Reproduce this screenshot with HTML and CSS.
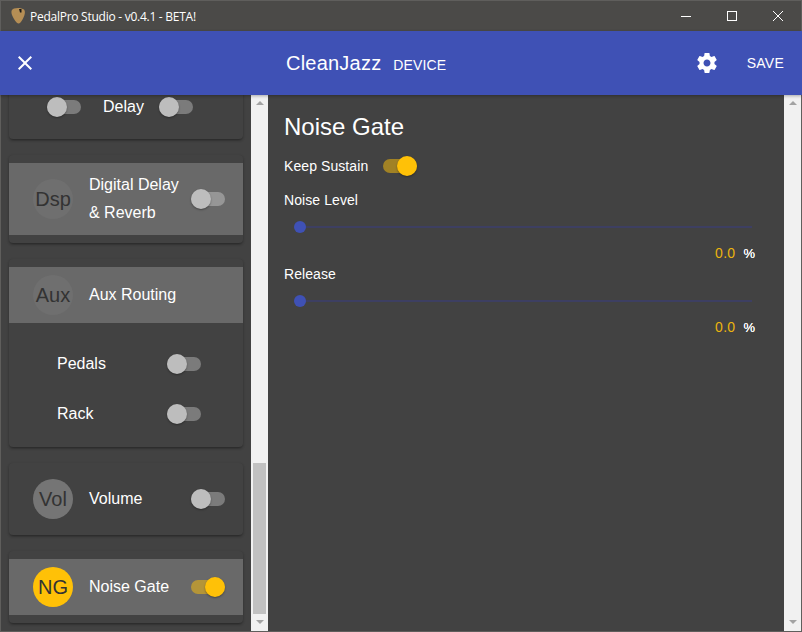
FILE: index.html
```html
<!DOCTYPE html>
<html lang="en">
<head>
<meta charset="utf-8">
<title>PedalPro Studio</title>
<link rel="stylesheet" href="styles.css">
</head>
<body>
<div class="window">
  <div class="titlebar">
    <svg class="pick" width="16" height="18" viewBox="0 0 16 18"><path d="M4 1.500C7 .5 12 .8 14 2.500c1.500 1.500 1 5-.5 8-1.200 2.500-2.800 5.500-4.500 6-1.500.3-3.500-2-5-4.500C2.500 9.500 1 6.500 1.500 4 1.800 2.800 2.800 2 4 1.500Z" fill="#b58e55"/><path d="M9 2h2.500v3.500H10z" fill="#1c1a18"/></svg>
    <span class="apptitle">PedalPro Studio - v0.4.1 - BETA!</span>
    <div class="winbtns">
      <svg class="winbtn" width="46" height="31" viewBox="0 0 46 31"><path d="M18 15.500h10" stroke="#fff" fill="none"/></svg>
      <svg class="winbtn" width="46" height="31" viewBox="0 0 46 31"><rect x="18.500" y="10.500" width="9" height="9" stroke="#fff" fill="none"/></svg>
      <svg class="winbtn" width="46" height="31" viewBox="0 0 46 31"><path d="M18 10l10 10M28 10L18 20" stroke="#fff" fill="none"/></svg>
    </div>
  </div>
  <header class="appbar">
    <svg class="closeicon" width="24" height="24" viewBox="0 0 24 24"><path fill="#fff" d="M19 6.410 17.590 5 12 10.590 6.410 5 5 6.410 10.590 12 5 17.590 6.410 19 12 13.410 17.590 19 19 17.590 13.410 12z"/></svg>
    <div class="apphead"><span class="patch">CleanJazz</span><span class="device">DEVICE</span></div>
    <svg class="gear" width="24" height="24" viewBox="0 0 24 24"><path fill="#fff" d="M19.430 12.980c.04-.32.07-.64.070-.98s-.03-.66-.07-.98l2.110-1.650c.19-.15.240-.42.120-.64l-2-3.460c-.12-.22-.39-.3-.61-.22l-2.490 1c-.52-.4-1.080-.73-1.690-.98l-.38-2.650C14.460 2.180 14.250 2 14 2h-4c-.25 0-.46.18-.49.42l-.38 2.650c-.61.25-1.170.59-1.690.98l-2.490-1c-.23-.09-.49 0-.61.22l-2 3.460c-.13.22-.07.49.12.64l2.110 1.650c-.04.32-.07.65-.07.98s.03.66.07.98l-2.110 1.650c-.19.15-.24.42-.12.64l2 3.460c.12.22.39.3.61.22l2.490-1c.52.4 1.080.73 1.690.98l.38 2.650c.03.24.24.42.49.42h4c.25 0 .46-.18.49-.42l.38-2.650c.61-.25 1.170-.59 1.690-.98l2.490 1c.23.09.49 0 .61-.22l2-3.460c.12-.22.07-.49-.12-.64l-2.110-1.650zM12 15.500c-1.930 0-3.500-1.570-3.500-3.500s1.570-3.500 3.500-3.500 3.500 1.570 3.500 3.500-1.570 3.500-3.500 3.500z"/></svg>
    <span class="save">SAVE</span>
  </header>
  <div class="body">
    <aside class="sidebar">
      <section class="card">
        <div class="row delayrow">
          <span class="toggle"><i class="track"></i><i class="thumb"></i></span>
          <span class="label delaylabel">Delay</span>
          <span class="toggle"><i class="track"></i><i class="thumb"></i></span>
        </div>
      </section>
      <section class="card">
        <div class="row band tall">
          <span class="avatar dim">Dsp</span>
          <span class="label two">Digital Delay<br>&amp; Reverb</span>
          <span class="toggle end"><i class="track"></i><i class="thumb"></i></span>
        </div>
      </section>
      <section class="card">
        <div class="row band">
          <span class="avatar dim">Aux</span>
          <span class="label">Aux Routing</span>
        </div>
        <div class="subs">
          <div class="sub"><span class="sublabel">Pedals</span><span class="toggle"><i class="track"></i><i class="thumb"></i></span></div>
          <div class="sub"><span class="sublabel">Rack</span><span class="toggle"><i class="track"></i><i class="thumb"></i></span></div>
        </div>
      </section>
      <section class="card">
        <div class="row">
          <span class="avatar">Vol</span>
          <span class="label">Volume</span>
          <span class="toggle end"><i class="track"></i><i class="thumb"></i></span>
        </div>
      </section>
      <section class="card">
        <div class="row band">
          <span class="avatar on">NG</span>
          <span class="label">Noise Gate</span>
          <span class="toggle end checked"><i class="track"></i><i class="thumb"></i></span>
        </div>
      </section>
    </aside>
    <div class="scrollbar">
      <i class="arrow up"></i>
      <div class="scrollspace left"><div class="scrollthumb"></div></div>
      <i class="arrow down"></i>
    </div>
    <main class="main">
      <h1 class="title">Noise Gate</h1>
      <div class="sustain"><span class="field">Keep Sustain</span><span class="toggle checked"><i class="track"></i><i class="thumb"></i></span></div>
      <div class="param">
        <div class="field">Noise Level</div>
        <div class="slider"><i class="sliderthumb"></i></div>
        <div class="value"><span class="num">0.0</span><span class="unit">%</span></div>
      </div>
      <div class="param">
        <div class="field">Release</div>
        <div class="slider"><i class="sliderthumb"></i></div>
        <div class="value"><span class="num">0.0</span><span class="unit">%</span></div>
      </div>
    </main>
    <div class="scrollbar">
      <i class="arrow up"></i>
      <div class="scrollspace"></div>
      <i class="arrow down"></i>
    </div>
  </div>
</div>
</body>
</html>
```
FILE: styles.css
```css
* { box-sizing: border-box; }
html, body { margin: 0; height: 100%; background: #424242; }
body { font-family: "Liberation Sans", Arial, sans-serif; color: #fff; overflow: hidden; }
.window { width: 802px; height: 632px; border: 1px solid #5f5e5c; display: flex; flex-direction: column; background: #424242; }

.titlebar { height: 30px; flex: none; background: #4b4a48; display: flex; align-items: center; padding-left: 9px; }
.pick { flex: none; }
.apptitle { font-family: "Open Sans", sans-serif; font-size: 12px; margin-left: 4px; color: #fff; letter-spacing: -.26px; }
.winbtns { margin-left: auto; display: flex; }
.winbtn { display: block; }

.appbar { height: 64px; flex: none; margin: 0 -1px; background: #3f51b5; display: flex; align-items: center; padding: 0 18px 0 13px; position: relative; z-index: 2; box-shadow: 0 1px 3px rgba(0,0,0,.3); }
.closeicon { flex: none; }
.apphead { flex: 1; display: flex; align-items: baseline; padding-left: 249px; }
.patch { font-size: 20px; letter-spacing: .22px; }
.device { font-size: 14px; margin-left: 12px; letter-spacing: .1px; }
.gear { flex: none; margin-right: 28px; }
.save { font-size: 14px; letter-spacing: .25px; }

.body { flex: 1; min-height: 0; display: flex; }
.sidebar { width: 250px; flex: none; overflow: hidden; display: flex; flex-direction: column; justify-content: flex-end; gap: 16px; padding: 0 8px 8px; }
.card { flex: none; background: #424242; border-radius: 4px; padding: 8px 0; box-shadow: 0 2px 3px -1px rgba(0,0,0,.35), 0 1px 3px rgba(0,0,0,.18); }
.row { height: 56px; display: flex; align-items: center; padding-left: 24px; }
.row.tall { height: 72px; }
.band { background: #696969; }
.delayrow { height: 48px; padding-left: 38px; }
.avatar { width: 40px; height: 40px; flex: none; border-radius: 50%; background: #757575; color: #333; font-size: 20px; display: flex; align-items: center; justify-content: center; }
.avatar.dim { background: #6f6f6f; }
.avatar.on { background: #ffc107; }
.label { font-size: 16px; margin-left: 16px; line-height: 28px; color: #fff; }
.label.two { width: 102px; flex: none; }
.delaylabel { margin-left: 22px; margin-right: 15px; }
.end { margin-left: auto; margin-right: 18px; }

.toggle { position: relative; display: inline-block; width: 34px; height: 20px; flex: none; }
.track { position: absolute; left: 0; right: 0; top: 3px; height: 14px; border-radius: 7px; background: rgba(255,255,255,.3); }
.thumb { position: absolute; left: 0; top: 0; width: 20px; height: 20px; border-radius: 50%; background: #bdbdbd; box-shadow: 0 1px 2px rgba(0,0,0,.35); }
.checked .track { background: rgba(255,193,7,.5); }
.checked .thumb { left: 14px; background: #ffc107; }

.subs { padding: 16px 42px 0 48px; height: 116px; }
.sub { height: 50px; display: flex; align-items: center; justify-content: space-between; }
.sublabel { font-size: 16px; }

.scrollbar { width: 17px; flex: none; background: #f1f1f1; display: flex; flex-direction: column; align-items: center; }
.scrollspace { flex: 1; width: 100%; display: flex; flex-direction: column; justify-content: flex-end; }
.scrollspace.left { padding: 0 2px; }
.scrollthumb { height: 151px; background: #c1c1c1; }
.arrow { flex: none; width: 0; height: 0; margin: 6px 0; border-left: 4px solid transparent; border-right: 4px solid transparent; }
.arrow.up { border-bottom: 4px solid #a3a3a3; }
.arrow.down { border-top: 4px solid #a3a3a3; margin-bottom: 7px; }

.main { flex: 1; min-width: 0; padding: 0 29px 0 16px; }
.title { font-size: 24px; font-weight: 400; line-height: 32px; margin: 16px 0 0; }
.field { font-size: 14px; letter-spacing: .08px; }
.sustain { display: flex; align-items: center; gap: 15px; margin-top: 13px; height: 20px; }
.sustain + .param { margin-top: 16px; }
.param .field { line-height: 16px; }
.slider { position: relative; height: 2px; background: #3d3f62; margin: 18px 3px 0 16px; }
.sliderthumb { position: absolute; left: -6px; top: -5px; width: 12px; height: 12px; border-radius: 50%; background: #3f51b5; }
.value { display: flex; justify-content: flex-end; align-items: center; height: 16px; margin-top: 17px; font-size: 14px; }
.num { color: #ebb40e; letter-spacing: .3px; }
.unit { margin-left: 8px; font-size: 13px; text-shadow: 0 0 .5px #fff; }
.param + .param { margin-top: 5px; }
```
